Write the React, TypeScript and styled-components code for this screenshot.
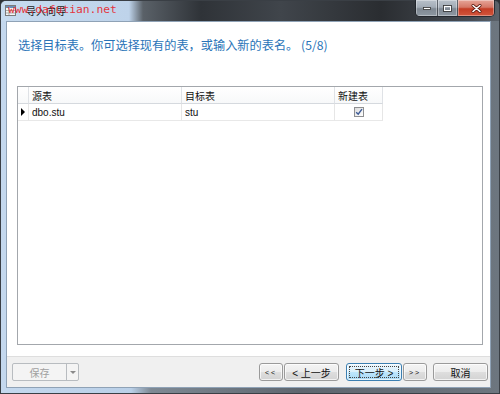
import styled, { createGlobalStyle } from "styled-components";

const GlobalStyle = createGlobalStyle`
  html, body {
    margin: 0;
    padding: 0;
  }
  body {
    width: 500px;
    height: 394px;
    overflow: hidden;
    background: #2e3237;
    font-family: "Liberation Sans", "Noto Sans CJK SC", sans-serif;
  }
`;

const Window = styled.div`
  width: 500px;
  height: 394px;
  box-sizing: border-box;
  display: flex;
  flex-direction: column;
  border: 1px solid #3a3f45;
  border-radius: 6px 6px 0 0;
  background: linear-gradient(
    90deg,
    #c4d8ee 0,
    #bad0e8 130px,
    #7e8994 150px,
    #5e666f 300px,
    #6d767f 100%
  );
`;

const TitleBar = styled.div`
  position: relative;
  height: 20px;
  display: flex;
  align-items: flex-start;
  border-radius: 5px 5px 0 0;
  background: linear-gradient(
    90deg,
    #c7dbef 0,
    #bed3ea 128px,
    #5a6168 142px,
    #2f3338 200px,
    #40454b 280px,
    #2a2d31 380px,
    #474c53 470px,
    #5c636b 100%
  );
`;

const TitleIcon = styled.svg`
  margin: 4px 0 0 4px;
  flex: none;
`;

const TitleText = styled.span`
  margin: 4px 0 0 10px;
  font-size: 10px;
  line-height: 12px;
  color: #1b1b1b;
  font-family: "Noto Sans CJK SC", sans-serif;
`;

const Watermark = styled.span`
  position: absolute;
  left: 7px;
  top: 2px;
  font-family: "DejaVu Sans Mono", "Liberation Mono", monospace;
  font-size: 11.3px;
  line-height: 14px;
  color: rgba(232, 28, 40, 0.9);
`;

const CaptionGroup = styled.div`
  margin-left: auto;
  margin-right: 4px;
  margin-top: -1px;
  display: flex;
  height: 16px;
  border: 1px solid rgba(30, 34, 40, 0.8);
  border-top: none;
  border-radius: 0 0 5px 5px;
  overflow: hidden;
`;

const CaptionButton = styled.div<{ $w: number; $close?: boolean }>`
  width: ${(p) => p.$w}px;
  height: 16px;
  box-sizing: border-box;
  display: flex;
  align-items: center;
  justify-content: center;
  border-right: 1px solid rgba(40, 44, 50, 0.6);
  box-shadow: inset 0 0 0 1px rgba(255, 255, 255, 0.35);
  background: ${(p) =>
    p.$close
      ? "linear-gradient(#e6a598 0, #d57867 45%, #c43d25 55%, #d2563c 100%)"
      : "linear-gradient(#b9c1ca 0, #a3acb6 45%, #7f8892 55%, #8e98a2 100%)"};
  &:last-child {
    border-right: none;
  }
`;

const Client = styled.div`
  flex: 1;
  margin: 0 8px 5px 5px;
  border: 1px solid #8fa2b6;
  background: #ffffff;
  display: flex;
  flex-direction: column;
`;

const Header = styled.div`
  height: 64px;
  flex: none;
  box-sizing: border-box;
  padding: 15px 0 0 11px;
`;

const Instruction = styled.div`
  font-family: "Noto Sans CJK SC", sans-serif;
  font-size: 12.2px;
  line-height: 16px;
  color: #2a74b8;
`;

const GridBox = styled.div`
  height: 259px;
  flex: none;
  box-sizing: border-box;
  margin: 0 7px 0 10px;
  border: 1px solid #a3a7ac;
  background: #ffffff;
`;

const GridRow = styled.div<{ $header?: boolean }>`
  display: grid;
  grid-template-columns: 11px 153px 153px 48px;
  height: 17px;
  width: 365px;
  background: ${(p) => (p.$header ? "linear-gradient(#ffffff, #f7f8f9)" : "#ffffff")};
`;

const Cell = styled.div<{ $header?: boolean; $center?: boolean }>`
  box-sizing: border-box;
  display: flex;
  align-items: center;
  justify-content: ${(p) => (p.$center ? "center" : "flex-start")};
  padding-left: ${(p) => (p.$center ? 0 : 3)}px;
  border-right: 1px solid ${(p) => (p.$header ? "#dfe2e6" : "#e6e6e6")};
  border-bottom: 1px solid ${(p) => (p.$header ? "#d5d9de" : "#e8e8e8")};
  font-size: 10px;
  color: #111;
  white-space: nowrap;
  overflow: hidden;
`;

const RowMarker = styled.div`
  width: 0;
  height: 0;
  margin-left: -1px;
  border-top: 4px solid transparent;
  border-bottom: 4px solid transparent;
  border-left: 4px solid #000;
`;

const CheckBox = styled.div`
  width: 10px;
  height: 10px;
  box-sizing: border-box;
  border: 1px solid #8e8f91;
  background: linear-gradient(135deg, #dcdcdc, #ffffff);
  display: flex;
  align-items: center;
  justify-content: center;
`;

const FooterBar = styled.div`
  margin-top: 11px;
  flex: 1;
  border-top: 1px solid #dedede;
  background: #f0f0f0;
  display: flex;
  align-items: center;
  padding: 0 2px 0 5px;
`;

const SplitButton = styled.div`
  width: 67px;
  height: 18px;
  box-sizing: border-box;
  border: 1px solid #b8bcc0;
  border-radius: 2px;
  background: #f4f4f4;
  display: flex;
  align-items: stretch;
`;

const SplitMain = styled.div`
  flex: 1;
  display: flex;
  align-items: center;
  justify-content: center;
  font-size: 10px;
  color: #a0a0a0;
  border-right: 1px solid #b8bcc0;
`;

const SplitArrow = styled.div`
  width: 11px;
  display: flex;
  align-items: center;
  justify-content: center;
  &::after {
    content: "";
    border-left: 3px solid transparent;
    border-right: 3px solid transparent;
    border-top: 3px solid #8a8a8a;
  }
`;

const NavGroup = styled.div`
  margin-left: auto;
  display: flex;
  align-items: center;
`;

const Button = styled.div<{ $w: number; $gap?: number; $focused?: boolean; $small?: boolean }>`
  position: relative;
  width: ${(p) => p.$w}px;
  height: 18px;
  margin-left: ${(p) => p.$gap ?? 0}px;
  box-sizing: border-box;
  display: flex;
  align-items: center;
  justify-content: center;
  border: 1px solid ${(p) => (p.$focused ? "#3c7fb1" : "#9a9a9a")};
  border-radius: 3px;
  font-size: ${(p) => (p.$small ? 7 : 10)}px;
  letter-spacing: ${(p) => (p.$small ? 2 : 0)}px;
  color: #111;
  white-space: nowrap;
  background: ${(p) =>
    p.$focused
      ? "linear-gradient(#eaf6fd 0, #d9f0fc 50%, #bee6fd 51%, #a7d9f5 100%)"
      : "linear-gradient(#f4f4f4 0, #ececec 50%, #dedede 51%, #d3d3d3 100%)"};
  box-shadow: inset 0 0 0 1px rgba(255, 255, 255, 0.7);
  ${(p) =>
    p.$focused &&
    `&::after {
      content: "";
      position: absolute;
      inset: 2px;
      border: 1px dotted #444;
    }`}
`;

export default function App() {
  return (
    <>
      <GlobalStyle />
      <Window>
        <TitleBar>
          <TitleIcon width="11" height="11" viewBox="0 0 11 11">
            <rect x="0.5" y="0.5" width="10" height="10" fill="#f6f6f6" stroke="#7a7a7a" />
            <rect x="1" y="1" width="9" height="2" fill="#6c8fb8" />
            <path d="M1 5.5h9M1 8h9M4 3v7" stroke="#9a9a9a" strokeWidth="0.8" />
          </TitleIcon>
          <TitleText>导入向导</TitleText>
          <Watermark>www.dafutian.net</Watermark>
          <CaptionGroup>
            <CaptionButton $w={22}>
              <svg width="8" height="3" viewBox="0 0 8 3">
                <rect x="0.5" y="0.5" width="7" height="2" fill="#fff" stroke="#333" strokeWidth="0.8" />
              </svg>
            </CaptionButton>
            <CaptionButton $w={20}>
              <svg width="9" height="7" viewBox="0 0 9 7">
                <rect x="0.5" y="0.5" width="8" height="6" fill="none" stroke="#333" strokeWidth="0.8" />
                <rect x="1.5" y="1.5" width="6" height="4" fill="none" stroke="#fff" strokeWidth="1" />
              </svg>
            </CaptionButton>
            <CaptionButton $w={36} $close>
              <svg width="11" height="9" viewBox="0 0 11 9">
                <path d="M2 1.5l7 6M9 1.5l-7 6" stroke="#5a1a10" strokeWidth="3" strokeLinecap="round" />
                <path d="M2 1.5l7 6M9 1.5l-7 6" stroke="#ffffff" strokeWidth="1.6" strokeLinecap="round" />
              </svg>
            </CaptionButton>
          </CaptionGroup>
        </TitleBar>

        <Client>
          <Header>
            <Instruction>选择目标表。你可选择现有的表，或输入新的表名。 (5/8)</Instruction>
          </Header>

          <GridBox>
            <GridRow $header>
              <Cell $header />
              <Cell $header>源表</Cell>
              <Cell $header>目标表</Cell>
              <Cell $header>新建表</Cell>
            </GridRow>
            <GridRow>
              <Cell $center>
                <RowMarker />
              </Cell>
              <Cell>dbo.stu</Cell>
              <Cell>stu</Cell>
              <Cell $center>
                <CheckBox>
                  <svg width="8" height="8" viewBox="0 0 8 8">
                    <path d="M1.2 4.2l2 2 3.8-5" fill="none" stroke="#3c5a96" strokeWidth="1.4" />
                  </svg>
                </CheckBox>
              </Cell>
            </GridRow>
          </GridBox>

          <FooterBar>
            <SplitButton>
              <SplitMain>保存</SplitMain>
              <SplitArrow />
            </SplitButton>
            <NavGroup>
              <Button $w={24} $small>
                &lt;&lt;
              </Button>
              <Button $w={55} $gap={1}>
                &lt; 上一步
              </Button>
              <Button $w={56} $gap={7} $focused>
                下一步 &gt;
              </Button>
              <Button $w={24} $gap={1} $small>
                &gt;&gt;
              </Button>
              <Button $w={55} $gap={6}>
                取消
              </Button>
            </NavGroup>
          </FooterBar>
        </Client>
      </Window>
    </>
  );
}
